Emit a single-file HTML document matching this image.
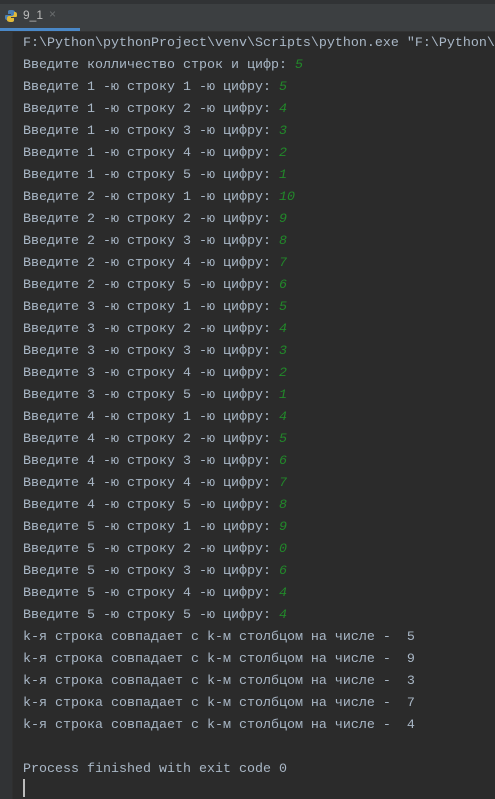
<!DOCTYPE html><html><head><meta charset="utf-8"><style>
body{margin:0;width:495px;height:799px;background:#2b2b2b;overflow:hidden;position:relative;font-family:"Liberation Mono","DejaVu Sans Mono",monospace}
.top{position:absolute;left:0;top:0;width:495px;height:4px;background:#313335}
.tabs{position:absolute;left:0;top:4px;width:495px;height:27px;background:#3c3f41;border-bottom:1px solid #323232}
.tab{position:absolute;left:0;top:4px;width:80px;height:24px;font:12px "Liberation Sans",sans-serif;color:#bbbbbb}
.ul{position:absolute;left:0;top:28px;width:80px;height:3px;background:#4a88c7}
.gut{position:absolute;left:0;top:32px;width:12px;height:767px;background:#313335;border-right:1px solid #2f2f2f}
.con{position:absolute;left:23px;top:33px;color:#a9b7c6;font-size:13.33px;line-height:22px;white-space:pre}
.g{color:#22882a;font-style:italic}
.cur{position:absolute;left:23px;top:779px;width:2px;height:18px;background:#bbbbbb}
</style></head><body>
<div class="top"></div><div class="tabs"></div>
<div class="tab"><svg style="position:absolute;left:4px;top:5px" width="14" height="14" viewBox="0 0 14 14"><path d="M7 1C4 1 4 2 4 3v2h3v1H2C1 6 1 7 1 8s0 3 2 3h1V9c0-1 1-2 2-2h3c1 0 2-1 2-2V3c0-1-1-2-4-2z" fill="#4a7fb5"/><path d="M7 13c3 0 3-1 3-2V9H7V8h5c1 0 1-1 1-2s0-3-2-3h-1v2c0 1-1 2-2 2H5c-1 0-2 1-2 2v2c0 1 1 2 4 2z" fill="#e0b93a"/></svg><span style="position:absolute;left:23px;top:4px">9_1</span><span style="position:absolute;left:49px;top:3px;color:#6b6e70">×</span></div>
<div class="ul"></div>
<div class="gut"></div>
<div class="con">F:\Python\pythonProject\venv\Scripts\python.exe "F:\Python\
Введите колличество строк и цифр: <span class="g">5</span>
Введите 1 -ю строку 1 -ю цифру: <span class="g">5</span>
Введите 1 -ю строку 2 -ю цифру: <span class="g">4</span>
Введите 1 -ю строку 3 -ю цифру: <span class="g">3</span>
Введите 1 -ю строку 4 -ю цифру: <span class="g">2</span>
Введите 1 -ю строку 5 -ю цифру: <span class="g">1</span>
Введите 2 -ю строку 1 -ю цифру: <span class="g">10</span>
Введите 2 -ю строку 2 -ю цифру: <span class="g">9</span>
Введите 2 -ю строку 3 -ю цифру: <span class="g">8</span>
Введите 2 -ю строку 4 -ю цифру: <span class="g">7</span>
Введите 2 -ю строку 5 -ю цифру: <span class="g">6</span>
Введите 3 -ю строку 1 -ю цифру: <span class="g">5</span>
Введите 3 -ю строку 2 -ю цифру: <span class="g">4</span>
Введите 3 -ю строку 3 -ю цифру: <span class="g">3</span>
Введите 3 -ю строку 4 -ю цифру: <span class="g">2</span>
Введите 3 -ю строку 5 -ю цифру: <span class="g">1</span>
Введите 4 -ю строку 1 -ю цифру: <span class="g">4</span>
Введите 4 -ю строку 2 -ю цифру: <span class="g">5</span>
Введите 4 -ю строку 3 -ю цифру: <span class="g">6</span>
Введите 4 -ю строку 4 -ю цифру: <span class="g">7</span>
Введите 4 -ю строку 5 -ю цифру: <span class="g">8</span>
Введите 5 -ю строку 1 -ю цифру: <span class="g">9</span>
Введите 5 -ю строку 2 -ю цифру: <span class="g">0</span>
Введите 5 -ю строку 3 -ю цифру: <span class="g">6</span>
Введите 5 -ю строку 4 -ю цифру: <span class="g">4</span>
Введите 5 -ю строку 5 -ю цифру: <span class="g">4</span>
k-я строка совпадает с k-м столбцом на числе -  5
k-я строка совпадает с k-м столбцом на числе -  9
k-я строка совпадает с k-м столбцом на числе -  3
k-я строка совпадает с k-м столбцом на числе -  7
k-я строка совпадает с k-м столбцом на числе -  4

Process finished with exit code 0</div>
<div class="cur"></div>
</body></html>
